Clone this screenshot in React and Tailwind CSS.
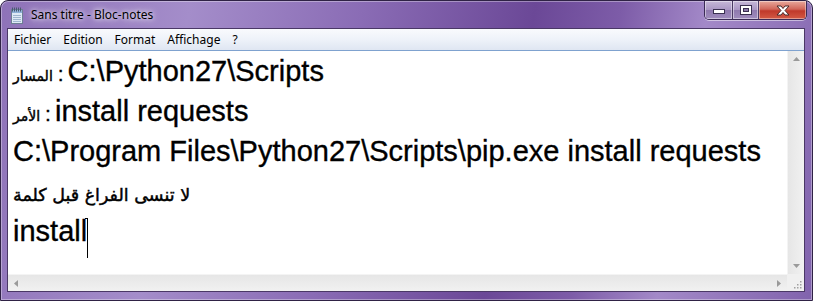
import React from 'react';

function NotepadIcon() {
  return (
    <svg width="16" height="17" viewBox="0 0 16 17">
      <rect x="2.5" y="2.5" width="11" height="14" fill="#dfeaf5" stroke="#6d7f94" />
      <rect x="3" y="3" width="10" height="3" fill="#8fb2d8" />
      {[3, 5, 7, 9, 11].map((x) => (
        <rect key={x} x={x} y="0.5" width="1" height="4" fill="#4a5a70" />
      ))}
      {[8, 10, 12, 14].map((y) => (
        <rect key={y} x="4" y={y} width="8" height="1" fill="#9fb6cf" />
      ))}
    </svg>
  );
}

function TitleButtons() {
  return (
    <div className="flex h-[19px] mr-[5px] rounded-b-[5px] border border-t-0 border-[#3b2b55] overflow-hidden shadow-[0_1px_0_rgba(255,255,255,0.5)]">
      <div className="w-[28px] h-full flex items-center justify-center border-r border-[#4a3a63] bg-[linear-gradient(180deg,#c6b8d8_0%,#a996c3_50%,#8f79ae_51%,#a08cbd_100%)] shadow-[inset_0_0_0_1px_rgba(255,255,255,0.45)]">
        <svg width="12" height="8" viewBox="0 0 12 8">
          <rect x="0.5" y="3.5" width="11" height="4" fill="#fff" stroke="#3a3050" />
        </svg>
      </div>
      <div className="w-[26px] h-full flex items-center justify-center border-r border-[#4a3a63] bg-[linear-gradient(180deg,#c6b8d8_0%,#a996c3_50%,#8f79ae_51%,#a08cbd_100%)] shadow-[inset_0_0_0_1px_rgba(255,255,255,0.45)]">
        <svg width="12" height="10" viewBox="0 0 12 10">
          <rect x="0.5" y="0.5" width="11" height="9" fill="#fff" stroke="#3a3050" />
          <rect x="3.5" y="3.5" width="5" height="3" fill="#8a78a8" stroke="#3a3050" />
        </svg>
      </div>
      <div className="w-[47px] h-full flex items-center justify-center bg-[linear-gradient(180deg,#e9a99c_0%,#d2675a_45%,#c0392b_55%,#d35a45_100%)] shadow-[inset_0_0_0_1px_rgba(255,255,255,0.4)]">
        <svg width="14" height="11" viewBox="0 0 14 11">
          <path d="M1 1 L5 1 L7 3.5 L9 1 L13 1 L9 5.5 L13 10 L9 10 L7 7.5 L5 10 L1 10 L5 5.5 Z" fill="#fff" stroke="#4a2a2a" strokeWidth="1" strokeLinejoin="round" />
        </svg>
      </div>
    </div>
  );
}

function Arrow({ dir }) {
  const d = {
    up: 'M0 4 L3.5 0 L7 4 Z',
    down: 'M0 0 L7 0 L3.5 4 Z',
    left: 'M4 0 L4 7 L0 3.5 Z',
    right: 'M0 0 L4 3.5 L0 7 Z',
  }[dir];
  const vertical = dir === 'up' || dir === 'down';
  return (
    <svg width={vertical ? 7 : 4} height={vertical ? 4 : 7} viewBox={vertical ? '0 0 7 4' : '0 0 4 7'}>
      <path d={d} fill="#9a9a9a" />
    </svg>
  );
}

export default function App() {
  const arabic = "font-['DejaVu_Sans',sans-serif] leading-none [-webkit-text-stroke:0.45px_black]";
  const colon = 'inline-block text-[21px] leading-none ml-[5px] mr-[4px]';
  return (
    <div className="w-[813px] h-[301px] bg-white">
      <div className="w-full h-full flex flex-col rounded-t-[8px] border border-[#2f2245] bg-[linear-gradient(100deg,#8e72b8_0%,#a48dca_22%,#8a6cb5_42%,#6b4897_62%,#7d5ca8_72%,#a389c8_82%,#8163ad_100%)] shadow-[inset_0_0_0_1px_rgba(255,255,255,0.35)]">
        <div className="h-[27px] shrink-0 flex items-start">
          <div className="flex items-center gap-[6px] pl-[8px] pt-[5px]">
            <NotepadIcon />
            <span className="font-['Noto_Sans',sans-serif] text-[12px] text-black [text-shadow:0_0_8px_rgba(255,255,255,0.9),0_0_4px_rgba(255,255,255,0.8)]">
              Sans titre - Bloc-notes
            </span>
          </div>
          <div className="ml-auto">
            <TitleButtons />
          </div>
        </div>

        <div className="flex-1 min-h-0 flex flex-col ml-[6px] mr-[7px] border border-[#4a3866] bg-white">
          <div className="h-[21px] shrink-0 flex items-center gap-[12px] pl-[6px] bg-[linear-gradient(180deg,#f9fafd_0%,#eef2f9_50%,#dfe6f2_100%)] font-['Noto_Sans',sans-serif] text-[12px] text-black">
            <span>Fichier</span>
            <span>Edition</span>
            <span>Format</span>
            <span>Affichage</span>
            <span>?</span>
          </div>
          <div className="flex-1 min-h-0 flex flex-col border-t border-[#7fa2cf]">
            <div className="flex-1 min-h-0 flex">
              <div className="flex-1 pl-[5px] font-['Liberation_Sans',Arial,sans-serif] text-[29px] leading-[40px] text-black whitespace-pre overflow-hidden [-webkit-text-stroke:0.35px_black]">
                <div className="h-[40px]">
                  <span className={`${arabic} text-[14px]`}>المسار</span>
                  <span className={colon}>:</span>
                  <span>C:\Python27\Scripts</span>
                </div>
                <div className="h-[40px]">
                  <span className={`${arabic} text-[14px]`}>الأمر</span>
                  <span className={colon}>:</span>
                  <span>install requests</span>
                </div>
                <div className="h-[40px]">C:\Program Files\Python27\Scripts\pip.exe install requests</div>
                <div className="h-[40px]">
                  <span dir="rtl" className={`${arabic} text-[17.5px]`}>لا تنسى الفراغ قبل كلمة</span>
                </div>
                <div className="h-[40px] flex items-start">
                  <span>install</span>
                  <span className="relative mt-[7px] w-[1px] h-[40px] bg-black">
                    <span className="absolute top-0 -left-[2px] w-[2px] h-[1px] bg-black" />
                  </span>
                </div>
              </div>
              <div className="w-[17px] shrink-0 flex flex-col items-center justify-between py-[6px] bg-[linear-gradient(90deg,#e6e6e6,#f1f1f1)] border-l border-[#f4f4f4]">
                <Arrow dir="up" />
                <Arrow dir="down" />
              </div>
            </div>
            <div className="h-[17px] shrink-0 flex">
              <div className="flex-1 flex items-center justify-between px-[6px] bg-[linear-gradient(180deg,#e6e6e6,#f1f1f1)] border-t border-[#f4f4f4]">
                <Arrow dir="left" />
                <Arrow dir="right" />
              </div>
              <div className="w-[17px] bg-[#f0f0f0] flex items-end justify-end p-[2px]">
                <svg width="10" height="10" viewBox="0 0 10 10">
                  {[[8, 2], [8, 5], [8, 8], [5, 5], [5, 8], [2, 8]].map(([x, y]) => (
                    <rect key={x + '-' + y} x={x} y={y} width="1.5" height="1.5" fill="#a0a0a0" />
                  ))}
                </svg>
              </div>
            </div>
          </div>
        </div>
        <div className="h-[8px] shrink-0" />
      </div>
    </div>
  );
}
